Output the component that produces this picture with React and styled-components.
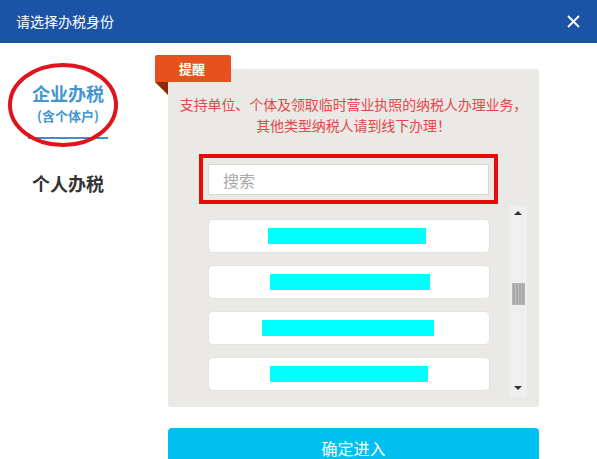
import React from "react";
import styled, { createGlobalStyle } from "styled-components";

const Global = createGlobalStyle`
  html, body { margin: 0; padding: 0; background: #fff; }
  body { font-family: "Noto Sans CJK SC", "Noto Sans", sans-serif; width: 597px; height: 459px; overflow: hidden; }
  * { box-sizing: border-box; }
`;

const Dialog = styled.div`
  width: 597px;
  height: 459px;
  display: flex;
  flex-direction: column;
  overflow: hidden;
`;

const Header = styled.div`
  flex-shrink: 0;
  height: 43px;
  background: #1b54a7;
  display: flex;
  align-items: center;
  justify-content: space-between;
  padding: 0 17px 0 16px;
  color: #fff;
`;

const Title = styled.div`
  font-size: 14px;
  line-height: 14px;
  margin-top: -2px;
`;

const Close = styled.svg`
  width: 13px;
  height: 13px;
  margin-top: -1px;
`;

const Body = styled.div`
  flex: 1;
  min-height: 0;
  display: flex;
`;

const Side = styled.div`
  width: 155px;
  flex-shrink: 0;
  display: flex;
  flex-direction: column;
  padding-top: 38px;
`;

const Tab = styled.div`
  position: relative;
  width: 80px;
  margin-left: 28px;
  display: flex;
  flex-direction: column;
  align-items: center;
  font-weight: bold;
  color: ${(p) => (p.$active ? "#4496d3" : "#333")};
  border-bottom: 2px solid ${(p) => (p.$active ? "#3f8fcf" : "transparent")};
  padding-bottom: ${(p) => (p.$active ? "13px" : "0")};
  margin-bottom: ${(p) => (p.$active ? "32px" : "0")};
`;

const TabName = styled.div`
  font-size: 18px;
  line-height: 24px;
`;

const TabSub = styled.div`
  font-size: 13px;
  line-height: 16px;
  margin-top: 3px;
`;

const Circle = styled.svg`
  position: absolute;
  left: -21px;
  top: -19px;
  width: 112px;
  height: 86px;
  pointer-events: none;
`;

const Main = styled.div`
  flex: 1;
  padding: 26px 58px 0 13px;
  display: flex;
  flex-direction: column;
`;

const Panel = styled.div`
  position: relative;
  flex-shrink: 0;
  background: #eae9e5;
  border-radius: 3px;
  height: 338px;
  display: flex;
  flex-direction: column;
  align-items: center;
  padding-top: 25px;
`;

const Badge = styled.div`
  position: absolute;
  left: -13px;
  top: -14px;
  width: 76px;
  height: 27px;
  background: #e6511d;
  color: #fff;
  font-weight: bold;
  font-size: 13px;
  display: flex;
  align-items: center;
  padding-left: 24px;
  border-radius: 2px 2px 0 0;
  &::after {
    content: "";
    position: absolute;
    left: 0;
    top: 27px;
    border-style: solid;
    border-width: 0 13px 13px 0;
    border-color: transparent #8e2a0c transparent transparent;
  }
`;

const Notice = styled.div`
  color: #e5474b;
  font-size: 14px;
  line-height: 21px;
  text-align: center;
  letter-spacing: -0.1px;
`;

const Highlight = styled.div`
  margin-top: 18px;
  margin-left: -10px;
  width: 299px;
  height: 50px;
  flex-shrink: 0;
  border: 4px solid #ea0a0a;
  padding: 6px 5px 5px 5px;
`;

const SearchInput = styled.input`
  width: 100%;
  height: 31px;
  border: 1px solid #d6d8d6;
  background: #fff;
  font-family: inherit;
  font-size: 16px;
  padding: 0 14px;
  color: #333;
  outline: none;
  &::placeholder { color: #a8a8a8; }
`;

const ListArea = styled.div`
  margin-top: 2px;
  width: 100%;
  display: flex;
  padding-left: 40px;
  height: 191px;
  flex-shrink: 0;
`;

const List = styled.div`
  width: 282px;
  display: flex;
  flex-direction: column;
  gap: 12px;
  padding-top: 13px;
`;

const Item = styled.div`
  height: 34px;
  flex-shrink: 0;
  background: #fff;
  border-radius: 5px;
  border: 1px solid #e2e2e2;
  display: flex;
  align-items: center;
`;

const Bar = styled.div`
  height: 16px;
  background: #00ffff;
`;

const Scroll = styled.div`
  margin-left: 19px;
  width: 18px;
  background: #efefef;
  display: flex;
  flex-direction: column;
  align-items: center;
  padding: 5px 0 7px;
`;

const Arrow = styled.div`
  width: 0;
  height: 0;
  border-left: 4px solid transparent;
  border-right: 4px solid transparent;
  ${(p) => (p.$down ? "border-top: 4px solid #333;" : "border-bottom: 4px solid #333;")}
`;

const Thumb = styled.div`
  width: 13px;
  height: 22px;
  margin-top: 68px;
  background: repeating-linear-gradient(90deg, #a9a9a9 0 2px, #bdbdbd 2px 3px);
  border: 1px solid #b5b5b5;
`;

const Spacer = styled.div`flex: 1;`;

const Confirm = styled.button`
  flex-shrink: 0;
  margin-top: 21px;
  height: 40px;
  border: none;
  border-radius: 4px;
  background: #00c0ef;
  color: #fff;
  font-family: inherit;
  font-size: 16px;
  padding: 0;
`;

const items = [
  { left: 59, width: 158 },
  { left: 61, width: 160 },
  { left: 53, width: 172 },
  { left: 61, width: 158 },
];

export default function App() {
  return (
    <>
      <Global />
      <Dialog>
        <Header>
          <Title>请选择办税身份</Title>
          <Close viewBox="0 0 13 13">
            <path d="M1 1 L12 12 M12 1 L1 12" stroke="#fff" strokeWidth="1.8" fill="none" />
          </Close>
        </Header>
        <Body>
          <Side>
            <Tab $active>
              <TabName>企业办税</TabName>
              <TabSub>(含个体户)</TabSub>
              <Circle viewBox="0 0 112 86">
                <ellipse cx="56" cy="43" rx="53" ry="40" fill="none" stroke="#e0141c" strokeWidth="4" />
              </Circle>
            </Tab>
            <Tab>
              <TabName>个人办税</TabName>
            </Tab>
          </Side>
          <Main>
            <Panel>
              <Badge>提醒</Badge>
              <Notice>
                支持单位、个体及领取临时营业执照的纳税人办理业务，
                <br />
                其他类型纳税人请到线下办理！
              </Notice>
              <Highlight>
                <SearchInput placeholder="搜索" />
              </Highlight>
              <ListArea>
                <List>
                  {items.map((it, i) => (
                    <Item key={i}>
                      <Bar style={{ marginLeft: it.left, width: it.width }} />
                    </Item>
                  ))}
                </List>
                <Scroll>
                  <Arrow />
                  <Thumb />
                  <Spacer />
                  <Arrow $down />
                </Scroll>
              </ListArea>
            </Panel>
            <Confirm>确定进入</Confirm>
          </Main>
        </Body>
      </Dialog>
    </>
  );
}
